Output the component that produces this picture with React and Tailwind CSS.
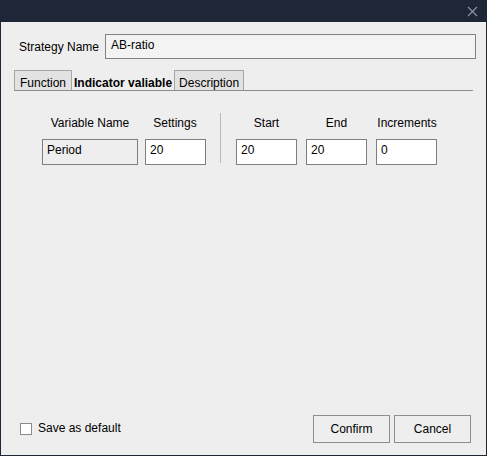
export default function App() {
  const font = { fontFamily: '"Liberation Sans", Arial, sans-serif' };
  return (
    <div className="w-[487px] h-[456px] flex flex-col bg-[#1d2737] text-[12px] text-black" style={font}>
      <div className="h-[22px] flex items-center justify-end pr-[9px]">
        <svg width="11" height="11" viewBox="0 0 11 11">
          <path d="M1 1L10 10M10 1L1 10" stroke="#8a93a6" strokeWidth="1.2" />
        </svg>
      </div>
      <div className="flex-1 mx-px mb-px bg-[#efeeef] flex flex-col">
        <div className="flex items-center mt-[12px] ml-[18px] mr-[10px]">
          <span className="w-[86px]">Strategy Name</span>
          <div className="flex-1 h-[25px] border border-[#828282] bg-[#f3f3f3] px-[5px] pt-px">AB-ratio</div>
        </div>
        <div className="flex items-end mt-[12px] ml-[13px] mr-[13px] h-[20px] border-b border-[#8c8c8c]">
          <div className="h-[20px] px-[5px] pt-[3px] border border-b-0 border-[#a7a7a7] bg-[#e2e2e2]">Function</div>
          <div className="h-[20px] px-[2px] pt-[4px] font-bold">Indicator valiable</div>
          <div className="h-[20px] px-[4px] pt-[3px] border border-b-0 border-[#a7a7a7] bg-[#e2e2e2]">Description</div>
        </div>
        <div className="flex mt-[23px] ml-[41px]">
          <div className="flex flex-col gap-[7px]">
            <div className="flex">
              <span className="w-[96px] text-center">Variable Name</span>
              <span className="w-[60px] ml-[7px] text-center">Settings</span>
            </div>
            <div className="flex">
              <div className="w-[96px] h-[26px] border border-[#7e7e7e] bg-[#eeeeee] px-[4px] pt-px">Period</div>
              <div className="w-[61px] h-[26px] ml-[7px] border border-[#7e7e7e] bg-white px-[4px] pt-px">20</div>
            </div>
          </div>
          <div className="w-px h-[50px] bg-[#b8b8b8] mt-[-1px] ml-[14px]" />
          <div className="flex flex-col gap-[7px] ml-[15px]">
            <div className="flex">
              <span className="w-[61px] text-center">Start</span>
              <span className="w-[61px] ml-[9px] text-center">End</span>
              <span className="w-[62px] ml-[9px] text-center">Increments</span>
            </div>
            <div className="flex">
              <div className="w-[61px] h-[26px] border border-[#7e7e7e] bg-white px-[4px] pt-px">20</div>
              <div className="w-[61px] h-[26px] ml-[9px] border border-[#7e7e7e] bg-white px-[4px] pt-px">20</div>
              <div className="w-[61px] h-[26px] ml-[9px] border border-[#7e7e7e] bg-white px-[4px] pt-px">0</div>
            </div>
          </div>
        </div>
        <div className="flex-1" />
        <div className="flex items-center mb-[12px] ml-[19px] mr-[15px]">
          <div className="w-[12px] h-[12px] border border-[#8a8a8a] bg-white" />
          <span className="ml-[6px] mb-[3px]">Save as default</span>
          <div className="flex-1" />
          <div className="w-[77px] h-[28px] border border-[#8e8e8e] bg-[#eeeeee] flex items-center justify-center">Confirm</div>
          <div className="w-[77px] h-[28px] ml-[4px] border border-[#8e8e8e] bg-[#eeeeee] flex items-center justify-center">Cancel</div>
        </div>
      </div>
    </div>
  );
}
